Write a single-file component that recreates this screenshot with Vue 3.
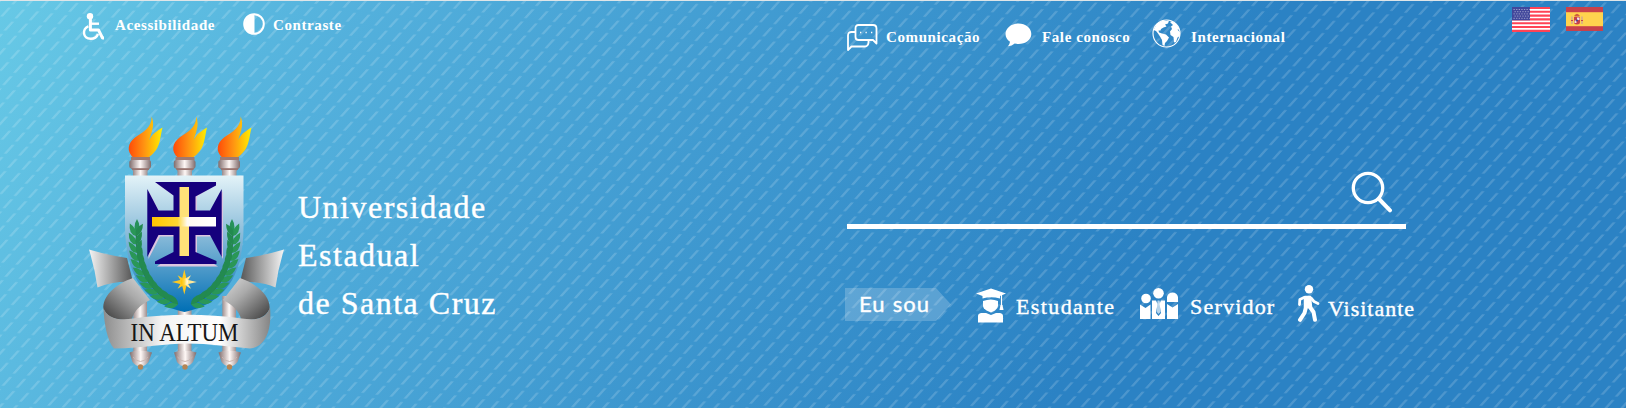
<script setup>
const torches = [0, 44.5, 89]

const curve = (t) => {
  const p = [[136, 236], [135, 268], [150, 295], [178, 304]]
  const u = 1 - t
  const at = (i) => u ** 3 * p[0][i] + 3 * u * u * t * p[1][i] + 3 * u * t * t * p[2][i] + t ** 3 * p[3][i]
  const d = (i) => 3 * u * u * (p[1][i] - p[0][i]) + 6 * u * t * (p[2][i] - p[1][i]) + 3 * t * t * (p[3][i] - p[2][i])
  return { x: at(0), y: at(1), a: (Math.atan2(d(1), d(0)) * 180) / Math.PI + 180 }
}
const leaves = Array.from({ length: 12 }, (_, i) => curve(i / 11)).flatMap((p) => [
  { ...p, a: p.a - 28, c: '#2a9757' },
  { ...p, a: p.a + 28, c: '#238a50' },
])
const stars = [0, 45, 90, 135, 180, 225, 270, 315]
</script>

<template>
  <header class="hero">
    <svg class="texture" width="1626" height="408" aria-hidden="true">
      <defs>
        <pattern id="dash" width="1" height="1" patternUnits="userSpaceOnUse" patternTransform="matrix(11 -12.2 14.2 1.9 4 4)">
          <path d="M0.14 .5H.86" stroke="#fff" stroke-opacity=".16" stroke-width=".19" />
        </pattern>
      </defs>
      <rect width="1626" height="408" fill="url(#dash)" />
    </svg>

    <section class="identity">
      <nav class="utility">
        <a class="access">
          <svg width="23" height="28" viewBox="0 0 23 28" fill="none" stroke="#fff">
            <circle cx="8" cy="3.3" r="3.2" fill="#fff" stroke="none" />
            <path d="M8.4 6V17H16.5L20.5 25H22" stroke-width="3" stroke-linejoin="round" />
            <path d="M9 10.7H17" stroke-width="2.4" />
            <path d="M6.3 13.3C0 16.5 .5 25.6 8.8 25.8C12.5 25.8 15 23.7 16 21" stroke-width="2.4" />
          </svg>
          <span>Acessibilidade</span>
        </a>
        <a class="contrast">
          <svg width="22" height="22" viewBox="0 0 22 22">
            <circle cx="11" cy="11" r="9.8" fill="none" stroke="#fff" stroke-width="2" />
            <path d="M11.5 1A10 10 0 0 0 11.5 21Z" fill="#fff" />
          </svg>
          <span>Contraste</span>
        </a>
      </nav>

      <div class="brand">
        <svg class="crest" width="205" height="265" viewBox="85 110 205 265">
          <defs>
            <linearGradient id="flame"><stop offset="0" stop-color="#ff4b08" /><stop offset=".45" stop-color="#ff9212" /><stop offset="1" stop-color="#fff000" /></linearGradient>
            <linearGradient id="metal"><stop offset="0" stop-color="#806c6c" /><stop offset=".5" stop-color="#fff8f6" /><stop offset="1" stop-color="#806c6c" /></linearGradient>
            <linearGradient id="staff"><stop offset="0" stop-color="#a08f8e" /><stop offset=".5" stop-color="#fffaf8" /><stop offset="1" stop-color="#a08f8e" /></linearGradient>
            <linearGradient id="shield" x2="0" y2="1"><stop offset="0" stop-color="#e3f3f8" /><stop offset=".45" stop-color="#86b9d8" /><stop offset="1" stop-color="#006fb5" /></linearGradient>
            <linearGradient id="band"><stop offset="0" stop-color="#8d8d8d" /><stop offset=".35" stop-color="#f4f4f4" /><stop offset=".7" stop-color="#fff" /><stop offset="1" stop-color="#858585" /></linearGradient>
            <linearGradient id="tail"><stop offset="0" stop-color="#f5f5f5" /><stop offset="1" stop-color="#555" /></linearGradient>
            <linearGradient id="fold" x1="1" y1="0" x2="0" y2="1"><stop offset="0" stop-color="#ddd" /><stop offset=".4" stop-color="#aaa" /><stop offset="1" stop-color="#383838" /></linearGradient>
            <linearGradient id="arm"><stop offset="0" stop-color="#ffc400" /><stop offset=".4" stop-color="#ffd633" /><stop offset=".55" stop-color="#fffaf0" /><stop offset="1" stop-color="#fff" /></linearGradient>
            <linearGradient id="ray"><stop offset="0" stop-color="#ffc000" /><stop offset=".5" stop-color="#ffd740" /><stop offset="1" stop-color="#fff" /></linearGradient>
          </defs>

          <g v-for="x in torches" :key="x" :transform="`translate(${x} 0)`">
            <path d="M133.500 158C126 151 128 143 135 137.500C144 131.500 151.500 128 151.700 116.500C155.500 126 150.500 134 149.300 140C152 134 157 131 162.500 127.500C159.500 140 160.500 150 147.500 158Z" fill="url(#flame)" />
            <path d="M131 157H150V160.500H131Z" fill="#a0796f" />
            <rect x="129.300" y="160" width="21.700" height="8.500" rx="2.500" fill="url(#metal)" />
            <path d="M131 168H150L147.500 171V176H133V171Z" fill="url(#metal)" />
            <rect x="132" y="168.200" width="17" height="1.800" fill="#98746f" />
            <path d="M133.300 296H147V353H133.300Z" fill="url(#staff)" />
            <path d="M134 351H146L152 352.500L148.500 362Q145.500 366 140.500 366.500Q135.500 366 132.500 362L129.500 352.500Z" fill="url(#metal)" />
            <path d="M133 357Q140.500 366 148 357" fill="none" stroke="#cbb5af" />
            <circle cx="140.500" cy="367" r="2.700" fill="#b58555" />
          </g>

          <g v-for="side in [0, 1]" :key="side" :transform="side ? 'translate(373 0) scale(-1 1)' : ''">
            <path d="M89 249.500Q107 255 127 258L133 282Q113 281 97.500 287.500Q95 269 89 249.500Z" fill="url(#tail)" />
            <path d="M133 278C115 284 102 297 103.500 309C108 319 119 321 132 319.500Q134 308 150 300Z" fill="url(#fold)" />
          </g>

          <path d="M125 175.500H243.500V228C243 275 226 303 184.500 312C143 303 126 275 125 228Z" fill="url(#shield)" />

          <g id="laurel">
            <path d="M136.500 229C135 268 150 295 178 304" fill="none" stroke="#2a7350" stroke-width="1.500" />
            <path d="M137 219Q142 227 137 236Q132 227 137 219Z" fill="#26915a" />
            <path
              v-for="(l, i) in leaves"
              :key="i"
              d="M0 0Q5 -6 14 0Q5 5 0 0Z"
              :fill="l.c"
              :transform="`translate(${l.x} ${l.y}) rotate(${l.a})`"
            />
          </g>
          <use href="#laurel" transform="translate(369 0) scale(-1 1)" />

          <path d="M156.500 183.500H217.500L197 196.500V212.500H211.500L223 191V259L211.500 236.500H197V253L218 266.500H157L175 253V236.500H160L148.500 259V191L160 212.500H175V196.500Z" fill="#dcc5df" />
          <path d="M155 182H216V185.500L195.500 196.500V210.500H210L221.700 189V257L210 235H195.500V252L216.500 261V264H155V261.500L173.500 252V235H158.500L147.300 257V189L158.500 210.500H173.500V195.500Z" fill="#15007d" />
          <path d="M179.500 187H189V256H179.500Z" fill="#ffe178" />
          <path d="M152 217H216V226.500H152Z" fill="url(#arm)" />

          <g transform="translate(184.300 282)">
            <path v-for="a in stars" :key="a" :d="a % 90 ? 'M-2.500 0L0 -9.500L2.500 0Z' : 'M-3 0L0 -12.500L3 0Z'" :transform="`rotate(${a})`" :fill="a > 0 && a < 180 ? '#ffe89a' : '#ffc91f'" />
            <circle r="3.500" fill="url(#ray)" />
          </g>

          <path d="M103.500 308C107 318 118 321 133 318.500Q187 311 242 318.500C257 321 267 318 270 307C272 329 266 347 250 348.500C230 347 210 343.500 187 343.500C165 343.500 145 348 114 348.500C107 341 104 322 103.500 308Z" fill="url(#band)" />
          <text x="130.500" y="340.500" class="motto" textLength="108" lengthAdjust="spacingAndGlyphs">IN ALTUM</text>
        </svg>
        <h1>Universidade<br />Estadual<br />de Santa Cruz</h1>
      </div>
    </section>

    <section class="actions">
      <div class="top">
        <nav class="contact">
          <a class="news">
            <svg width="31" height="28" viewBox="0 0 31 28" fill="none" stroke="#fff" stroke-width="1.800" stroke-linejoin="round">
              <path d="M11.500 1H26Q29.500 1 29.500 4.500V19.500L26 16H11.500Q8.500 16 8.500 13V4.500Q8.500 1 11.500 1Z" />
              <path d="M8 8H4.500Q1 8 1 11.500V26L4.500 22.500H18Q21 22.500 21.500 18.500V16" />
              <path d="M13 8.500H14.300M18.500 8.500H19.800M24 8.500H25.300" stroke-width="1.500" />
            </svg>
            <span>Comunicação</span>
          </a>
          <a class="talk">
            <svg width="27" height="24" viewBox="0 0 27 24">
              <path d="M13.500 .5C20.500 .5 26.300 5 26.300 11S20.500 21 13.500 21Q11.500 21 9.700 20.500Q7 23 3 23.200Q4.800 21 5 18.800C2 17 .5 14 .5 11C.5 5 6.500 .5 13.500 .5Z" fill="#fff" />
            </svg>
            <span>Fale conosco</span>
          </a>
          <a class="world">
            <svg width="29" height="29" viewBox="0 0 29 29">
              <circle cx="14.500" cy="14.500" r="13.500" fill="none" stroke="#fff" stroke-width="1.100" />
              <path d="M1.500 11L5 4.500L11 1.300L14 2L17 1.500L16 4.500L13 5.500L14.500 7.500L11.500 8.500L9 10L8.500 11.500L6.500 11.500L7 13.500L10 14.500L14 15.500L17 18.500L15 22L13 24L12.500 27L10.500 26L10 21L8 17.500L6 14.500L4 12Z" fill="#fff" />
              <path d="M18 3L20 2.300Q25.500 5 27.500 10.500L25.500 10.500L28 13.500L27.800 17L25.500 18.500L24 23L22 23.500L21.500 18L18.500 16L18 12.500L20 10L19 7.500L21 6Z" fill="#fff" />
            </svg>
            <span>Internacional</span>
          </a>
        </nav>
        <div class="flags">
          <svg width="38" height="25" viewBox="0 0 38 25">
            <rect width="38" height="25" fill="#fff" />
            <path d="M0 1H38M0 4.800H38M0 8.600H38M0 12.400H38M0 16.200H38M0 20H38M0 23.900H38" stroke="#ff4355" stroke-width="2.100" />
            <rect width="18" height="13.300" fill="#41479b" />
            <path d="M1.500 2.500H18M2.500 4.700H18M1.500 6.900H18M2.500 9.100H18M1.500 11.300H18" stroke="#a5a9d0" stroke-width=".9" stroke-dasharray="1.300 1.300" />
          </svg>
          <svg width="37" height="24" viewBox="0 0 37 24">
            <rect width="37" height="24" fill="#c8414b" />
            <rect y="5.200" width="37" height="14" fill="#ffd34e" />
            <path d="M6 9.500V17M16 9.500V17" stroke="#c9a0a0" stroke-width="1.200" />
            <path d="M8 10H14V15Q14 17.500 11 17.500Q8 17.500 8 15Z" fill="#c8414b" />
            <path d="M8.500 8.500Q11 5 13.500 8.500V9.500H8.500Z" fill="#d06040" />
            <path d="M11 10.500H13.500V13H11ZM8.500 13.500H10.500V16H8.500Z" fill="#f2dfe0" />
            <circle cx="11" cy="13.500" r="1" fill="#41479b" />
            <path d="M5 13.500H7M15 13.500H17" stroke="#c8414b" stroke-width="1" />
          </svg>
        </div>
      </div>

      <div class="search">
        <svg width="42" height="42" viewBox="0 0 42 42" fill="none" stroke="#fff" stroke-linecap="round">
          <circle cx="17" cy="17" r="14.700" stroke-width="3.300" />
          <path d="M28 28L39 39.300" stroke-width="4" />
        </svg>
      </div>

      <nav class="profiles">
        <div class="tag">Eu sou</div>
        <a class="student">
          <svg width="30" height="35" viewBox="0 0 30 35" fill="#fff">
            <path d="M0 5.500L15 .5L30 5.500L24 8V10.500Q15 8 6.500 10.500V8Z" />
            <path d="M7 13Q15 10 22 13V18Q22 20 19 22.500L15 24.500L10.500 22.500Q7 20 7 18Z" />
            <path d="M5 25H10L15 27L20 25H24Q27 25.500 27 28V34.500H2V28Q2 25.500 5 25Z" />
            <path d="M25.500 7V18" stroke="#fff" stroke-width="1.200" />
            <path d="M24.500 17H26.500L27.500 22H23.500Z" />
          </svg>
          <span>Estudante</span>
        </a>
        <a class="staff">
          <svg width="39" height="32" viewBox="0 0 39 32" fill="#fff">
            <circle cx="6" cy="10.500" r="4.800" />
            <circle cx="18.500" cy="5.300" r="5.300" />
            <path d="M27 14V9Q28 4.500 32.500 4.500Q37 4.500 38 9V14ZM27 16L32.500 19.500L38 16V31H27ZM0 16.500L5.500 20L10.500 16.500V31H0ZM12 12.500H16L17.500 16L16 25L18.500 28L21 25L19.500 16L21 12.500H25V31H12Z" />
            <path d="M17.500 12.500H19.500L20 15L20.500 24L18.500 26L16.800 24L17.300 15Z" fill-opacity=".65" />
          </svg>
          <span>Servidor</span>
        </a>
        <a class="visitor">
          <svg width="23" height="37" viewBox="0 0 23 37" fill="none" stroke="#fff" stroke-linecap="round" stroke-linejoin="round">
            <circle cx="12" cy="4.300" r="4.200" fill="#fff" stroke="none" />
            <path d="M8 12L13 12L14 22L8 22Z" fill="#fff" stroke-width="2.500" />
            <path d="M7 12.500L2.800 14.500L2.500 19.500M14 13L17 16.500L21 18.500" stroke-width="2.800" />
            <path d="M9 22L7.500 28L3 34.800M12.500 21.500L16.500 27L18 34.800" stroke-width="4" />
          </svg>
          <span>Visitante</span>
        </a>
      </nav>
    </section>
  </header>
</template>

<style>
body {
  margin: 0;
}
</style>

<style scoped>
.hero {
  position: relative;
  box-sizing: border-box;
  display: grid;
  grid-template-columns: 847px 1fr;
  width: 1626px;
  height: 408px;
  overflow: hidden;
  border-top: 1px solid #dfe5e8;
  background: linear-gradient(120deg, #67c9e6 0%, #53b0dc 20%, #3f99d0 44%, #2b82c4 69%, #2b82c4 100%);
  color: #fff;
  font-family: "Liberation Serif", serif;
}
.texture {
  position: absolute;
  inset: 0;
}
.identity,
.actions {
  position: relative;
}
svg {
  display: block;
  flex: none;
}
nav,
a,
.brand,
.top,
.flags {
  display: flex;
  align-items: flex-start;
}
span {
  white-space: nowrap;
}
.utility,
.contact {
  font-size: 15px;
  font-weight: 700;
  line-height: 18px;
  letter-spacing: 0.6px;
}
.utility {
  height: 109px;
  padding-left: 82px;
}
.access {
  width: 161px;
  gap: 10px;
  padding-top: 12px;
}
.access span {
  padding-top: 3px;
}
.contrast {
  gap: 8px;
  padding-top: 12px;
}
.contrast span {
  padding-top: 3px;
}
.brand {
  padding-left: 85px;
}
.motto {
  font-size: 25px;
  fill: #161616;
}
h1 {
  margin: 73px 0 0 8px;
  font-size: 32px;
  font-weight: 400;
  line-height: 48px;
  letter-spacing: 1.5px;
  -webkit-text-stroke: 0.4px #fff;
}
.top {
  height: 165px;
  justify-content: space-between;
}
.news {
  width: 158px;
  gap: 8px;
  padding-top: 23px;
}
.talk {
  width: 147px;
  gap: 10px;
  padding-top: 22px;
}
.world {
  gap: 10px;
  padding-top: 18px;
}
.news span {
  padding-top: 4px;
}
.talk span {
  padding-top: 5px;
}
.world span {
  padding-top: 9px;
}
.flags {
  gap: 16px;
  padding: 6px 23px 0 0;
}
.search {
  display: flex;
  justify-content: flex-end;
  box-sizing: border-box;
  width: 559px;
  height: 63px;
  padding: 5px 13px 0 0;
  border-bottom: 5px solid #fff;
}
.profiles {
  padding-top: 56px;
  font-size: 22px;
  line-height: 26px;
  letter-spacing: 1.4px;
  -webkit-text-stroke: 0.4px #fff;
}
.tag {
  box-sizing: border-box;
  width: 106px;
  height: 33px;
  margin: 3px 25px 0 -2px;
  padding-left: 14px;
  background: rgba(255, 255, 255, 0.2);
  clip-path: polygon(0 0, 91px 0, 100% 50%, 91px 100%, 0 100%);
  font: 400 22px/32px Lato, sans-serif;
  letter-spacing: 0.9px;
  word-spacing: 1px;
}
.student {
  width: 164px;
  gap: 10px;
  padding-top: 3px;
}
.student span {
  padding-top: 6px;
}
.staff {
  width: 157px;
  gap: 11px;
  padding-top: 3px;
}
.staff span {
  padding-top: 6px;
  letter-spacing: 1.2px;
}
.visitor {
  gap: 8px;
  letter-spacing: 1px;
}
.visitor span {
  padding-top: 11px;
}
</style>
